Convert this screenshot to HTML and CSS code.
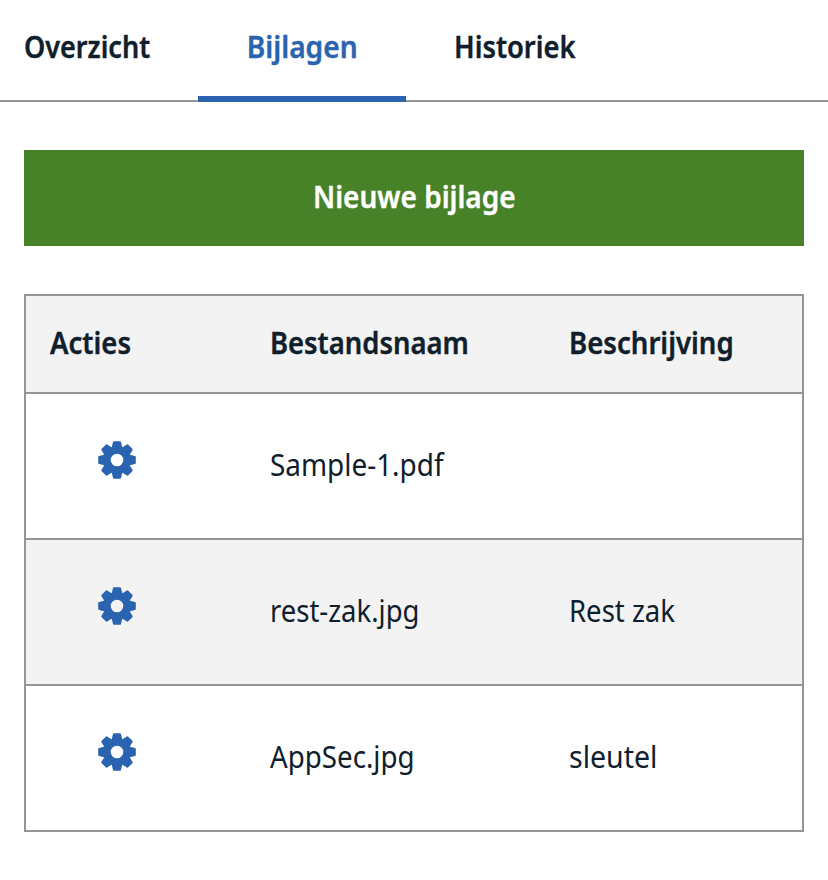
FILE: index.html
```html
<!DOCTYPE html>
<html lang="nl">
<head>
  <meta charset="utf-8">
  <title>Bijlagen</title>
  <link rel="stylesheet" href="styles.css">
</head>
<body>
  <svg class="sprite" aria-hidden="true">
    <symbol id="gear" viewBox="-19 -19 38 38">
      <g id="teeth">
        <path id="tooth" d="M-5.2-13 L-4-17.9 Q-3.8-18.8-2.9-18.8 H2.9 Q3.8-18.8 4-17.9 L5.2-13 Z"/>
        <use href="#tooth" transform="rotate(45)"/>
        <use href="#tooth" transform="rotate(90)"/>
        <use href="#tooth" transform="rotate(135)"/>
        <use href="#tooth" transform="rotate(180)"/>
        <use href="#tooth" transform="rotate(225)"/>
        <use href="#tooth" transform="rotate(270)"/>
        <use href="#tooth" transform="rotate(315)"/>
      </g>
      <circle r="10.2" fill="none" stroke="currentColor" stroke-width="7.8"/>
    </symbol>
  </svg>
  <nav class="tabs">
    <a class="tab"><span class="label w-overzicht">Overzicht</span></a>
    <a class="tab active"><span class="label w-bijlagen">Bijlagen</span></a>
    <a class="tab"><span class="label w-historiek">Historiek</span></a>
  </nav>
  <main>
    <button class="new"><span class="label w-nieuwe">Nieuwe bijlage</span></button>
    <div class="table">
      <div class="row head">
        <div class="cell first"><span class="label w-acties">Acties</span></div>
        <div class="cell"><span class="label w-naam">Bestandsnaam</span></div>
        <div class="cell"><span class="label w-beschrijving">Beschrijving</span></div>
      </div>
      <div class="row">
        <div class="cell action"><svg class="gear"><use href="#gear"/></svg></div>
        <div class="cell"><span class="label w-sample">Sample-1.pdf</span></div>
        <div class="cell"></div>
      </div>
      <div class="row alt">
        <div class="cell action"><svg class="gear"><use href="#gear"/></svg></div>
        <div class="cell"><span class="label w-restjpg">rest-zak.jpg</span></div>
        <div class="cell"><span class="label w-rest">Rest zak</span></div>
      </div>
      <div class="row">
        <div class="cell action"><svg class="gear"><use href="#gear"/></svg></div>
        <div class="cell"><span class="label w-appsec">AppSec.jpg</span></div>
        <div class="cell"><span class="label w-sleutel">sleutel</span></div>
      </div>
    </div>
  </main>
</body>
</html>
```

FILE: styles.css
```css
* { box-sizing: border-box; }

body {
  margin: 0;
  background: #fff;
  color: #0f202c;
  font-family: "Noto Sans", sans-serif;
  font-size: 31px;
  line-height: 40px;
}

.sprite { display: none; }

.label {
  display: inline-block;
  white-space: nowrap;
  transform-origin: left center;
}

.tabs {
  display: flex;
  height: 102px;
  background: linear-gradient(#959595, #959595) bottom / 100% 2px no-repeat;
  font-weight: 600;
}

.tabs, .new, .head { -webkit-text-stroke: 0.4px currentColor; }

.tab {
  height: 102px;
  padding: 26px 0 0 48px;
  width: 208px;
}

.tab:first-child { width: 198px; padding-left: 24px; }

.active {
  color: #2a64b0;
  border-bottom: 6px solid #2a64b0;
}

main { padding: 48px 24px; }

.new {
  display: flex;
  justify-content: center;
  width: 100%;
  height: 96px;
  padding: 26px 0 0;
  border: 0;
  background: #488228;
  color: #fff;
  font: inherit;
  font-weight: 600;
}

.table {
  margin-top: 48px;
  border: 2px solid #959595;
}

.row {
  display: grid;
  grid-template-columns: 244px 299px 1fr;
  height: 146px;
  border-top: 2px solid #959595;
}

.cell { padding-top: 50px; }

.head {
  height: 96px;
  border-top: 0;
  background: #f3f3f3;
  font-weight: 600;
}

.head .cell { padding-top: 26px; }
.head .first { padding-left: 24px; }
.alt { background: #f3f3f3; }
.action { padding: 47px 0 0 72px; }

.gear {
  display: block;
  width: 38px;
  height: 38px;
  color: #2a64b0;
  fill: currentColor;
}

.w-overzicht { transform: scaleX(0.872); }
.w-bijlagen { transform: translateX(0.7px) scaleX(0.908); }
.w-historiek { transform: scaleX(0.882); }
.w-nieuwe { transform: scaleX(0.902); transform-origin: center; }
.w-acties { transform: scaleX(0.888); }
.w-naam { transform: scaleX(0.884); }
.w-beschrijving { transform: scaleX(0.89); }
.w-sample { transform: scaleX(0.9); }
.w-restjpg { transform: scaleX(0.886); }
.w-rest { transform: scaleX(0.888); }
.w-appsec { transform: scaleX(0.894); }
.w-sleutel { transform: scaleX(0.92); }
```
